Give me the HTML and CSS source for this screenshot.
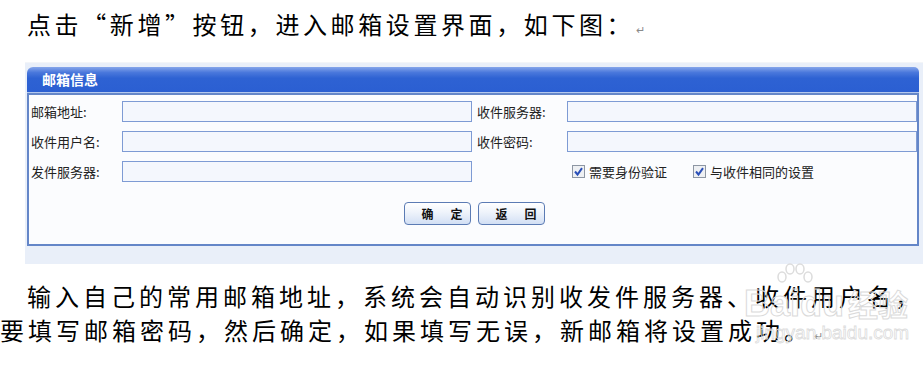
FILE: index.html
```html
<!DOCTYPE html>
<html lang="zh-CN">
<head>
    <meta charset="UTF-8">
    <title>邮箱设置</title>
    <link rel="stylesheet" href="styles.css">
</head>
<body>
    <p class="lead">点击“新增”按钮，进入邮箱设置界面，如下图：<span class="ret">↵</span></p>

    <div class="shot">
        <div class="panel">
            <div class="panel-title">邮箱信息</div>
            <div class="panel-body">
                <div class="form-grid">
                    <label>邮箱地址:</label>
                    <input class="field" type="text">
                    <label class="label-right">收件服务器:</label>
                    <input class="field" type="text">

                    <label>收件用户名:</label>
                    <input class="field" type="text">
                    <label class="label-right">收件密码:</label>
                    <input class="field" type="text">

                    <label>发件服务器:</label>
                    <input class="field" type="text">
                    <span></span>
                    <div class="checks">
                        <span class="check">
                            <svg class="box" width="13" height="13" viewBox="0 0 13 13">
                                <rect x="0.5" y="0.5" width="12" height="12" fill="#eef0f3" stroke="#8d96a3"/>
                                <path d="M3 6.5 L5.5 9.5 L10 3.2" fill="none" stroke="#2a4fb8" stroke-width="2"/>
                            </svg>
                            需要身份验证
                        </span>
                        <span class="check">
                            <svg class="box" width="13" height="13" viewBox="0 0 13 13">
                                <rect x="0.5" y="0.5" width="12" height="12" fill="#eef0f3" stroke="#8d96a3"/>
                                <path d="M3 6.5 L5.5 9.5 L10 3.2" fill="none" stroke="#2a4fb8" stroke-width="2"/>
                            </svg>
                            与收件相同的设置
                        </span>
                    </div>
                </div>

                <div class="actions">
                    <button class="btn">确定</button>
                    <button class="btn">返回</button>
                </div>
            </div>
        </div>
    </div>

    <div class="desc">
        <p class="first">输入自己的常用邮箱地址，系统会自动识别收发件服务器、收件用户名，</p>
        <p>要填写邮箱密码，然后确定，如果填写无误，新邮箱将设置成功。<span class="ret">↵</span></p>

        <div class="watermark">
            <svg class="paw" width="40" height="22" viewBox="0 0 40 22">
                <ellipse cx="8" cy="14" rx="4" ry="5" fill="none" stroke="#dcdcdc" stroke-width="1.5"/>
                <ellipse cx="16" cy="6" rx="4" ry="5" fill="none" stroke="#dcdcdc" stroke-width="1.5"/>
                <ellipse cx="26" cy="6" rx="4" ry="5" fill="none" stroke="#dcdcdc" stroke-width="1.5"/>
                <ellipse cx="34" cy="14" rx="4" ry="5" fill="none" stroke="#dcdcdc" stroke-width="1.5"/>
            </svg>
            <div class="wm-brand">Baidu<span class="wm-cn">经验</span></div>
            <div class="wm-url">jingyan.baidu.com</div>
        </div>
    </div>
</body>
</html>
```

FILE: styles.css
```css
* {
    margin: 0;
    padding: 0;
    box-sizing: border-box;
}

body {
    font-family: "Noto Sans CJK SC", "Liberation Sans", sans-serif;
    background: #fff;
    color: #000;
    width: 923px;
    overflow: hidden;
}

.lead {
    height: 41px;
    padding: 7px 0 0 27px;
    font-size: 24px;
    line-height: 34px;
    letter-spacing: 3.6px;
    white-space: nowrap;
}

.ret {
    font-size: 11px;
    line-height: 1;
    color: #8a8a8a;
    letter-spacing: 0;
    margin-left: 2px;
}

.shot {
    margin: 21px 0 0 25px;
    padding: 4px 4px 18px 2px;
    background: #e9eff9;
    border-top: 1px solid #f3f5f8;
}

.panel-title {
    height: 26px;
    padding-left: 15px;
    line-height: 25px;
    font-size: 14px;
    font-weight: bold;
    color: #fff;
    background: linear-gradient(#86a6ea 0%, #4a78dc 22%, #2e62d3 45%, #2b5fd2 100%);
    border-radius: 6px 5px 0 0;
    border-bottom: 1px solid #b4c8ee;
}

.panel-body {
    border: 2px solid #6486c8;
    background: #fbfcfe;
    padding: 6px 0 19px 2px;
}

.form-grid {
    display: grid;
    grid-template-columns: 91px 350px 95px 350px;
    grid-auto-rows: 21px;
    row-gap: 9px;
    align-items: center;
}

.form-grid label {
    font-size: 13px;
    color: #222;
    line-height: 21px;
}

.form-grid .label-right {
    padding-left: 5px;
}

.field {
    height: 21px;
    width: 350px;
    border: 1px solid #7e9bd4;
    background: #f4f7fd;
    outline: none;
}

.checks {
    display: flex;
    align-items: center;
    padding-left: 5px;
    font-size: 13px;
    line-height: 21px;
    color: #222;
}

.check {
    display: flex;
    align-items: center;
    gap: 4px;
    margin-right: 26px;
}

.actions {
    display: flex;
    justify-content: center;
    gap: 7px;
    margin-top: 20px;
}

.btn {
    width: 67px;
    height: 23px;
    padding: 0 0 0 17px;
    border: 1px solid #5b7bb4;
    border-radius: 4px;
    background: linear-gradient(#ffffff 0%, #eef3fb 45%, #d2dff4 100%);
    font-family: "Noto Sans CJK SC", sans-serif;
    font-size: 12px;
    line-height: 21px;
    font-weight: bold;
    color: #111;
    letter-spacing: 17px;
    white-space: nowrap;
}

.desc {
    position: relative;
    margin-top: 15px;
    font-size: 24px;
    line-height: 34px;
    letter-spacing: 4px;
    white-space: nowrap;
}

.desc p {
    height: 34px;
}

.desc .first {
    padding-left: 27px;
}

.watermark {
    position: absolute;
    left: 744px;
    top: -16px;
    letter-spacing: 0;
    pointer-events: none;
}

.paw {
    display: block;
    margin-left: 30px;
}

.wm-brand {
    font-family: "Liberation Sans", sans-serif;
    font-size: 36px;
    line-height: 36px;
    font-weight: bold;
    color: transparent;
    -webkit-text-stroke: 1px #dadada;
}

.wm-cn {
    font-family: "Noto Sans CJK SC", sans-serif;
    font-size: 30px;
    margin-left: 4px;
}

.wm-url {
    font-family: "Liberation Sans", sans-serif;
    font-size: 19px;
    line-height: 22px;
    color: transparent;
    -webkit-text-stroke: 0.8px #dcdcdc;
    margin-left: 12px;
}
```
